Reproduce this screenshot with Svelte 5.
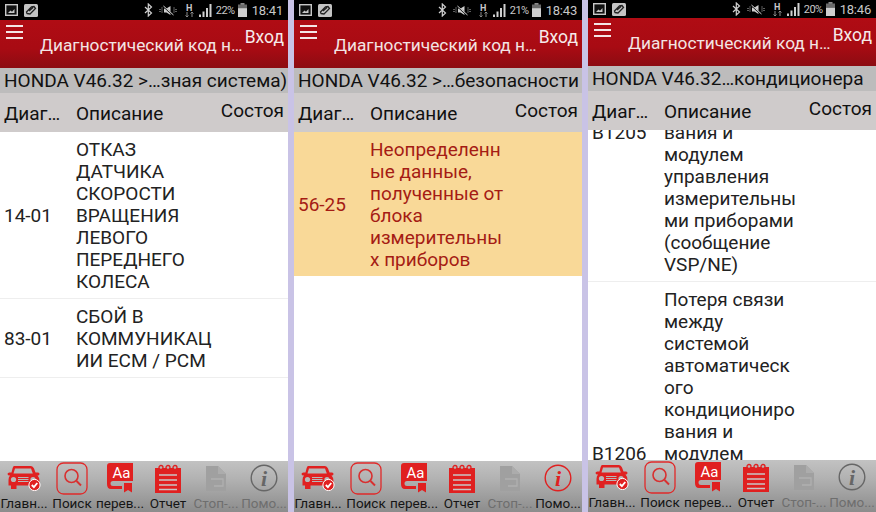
<script>
  const panels = [
    {
      battery: '22%', time: '18:41', fill: 0.7,
      crumb: 'HONDA V46.32 >…зная система)',
      rows: [
        { code: '14-01', text: 'ОТКАЗ\nДАТЧИКА\nСКОРОСТИ\nВРАЩЕНИЯ\nЛЕВОГО\nПЕРЕДНЕГО\nКОЛЕСА' },
        { code: '83-01', text: 'СБОЙ В\nКОММУНИКАЦ\nИИ ECM / PCM' }
      ]
    },
    {
      battery: '21%', time: '18:43', fill: 0.7, helpActive: true,
      crumb: 'HONDA V46.32 >…безопасности',
      rows: [
        { code: '56-25', selected: true, text: 'Неопределенн\nые данные,\nполученные от\nблока\nизмерительны\nх приборов' }
      ]
    },
    {
      battery: '20%', time: '18:46', fill: 0.65, compact: true, scrolled: true,
      crumb: 'HONDA V46.32…кондиционера',
      rows: [
        { code: 'B1205', first: true, text: 'вания и\nмодулем\nуправления\nизмерительны\nми приборами\n(сообщение\nVSP/NE)' },
        { code: 'B1206', last: true, text: 'Потеря связи\nмежду\nсистемой\nавтоматическ\nого\nкондициониро\nвания и\nмодулем' }
      ]
    }
  ];
  const tabs = ['Главн...', 'Поиск', 'перев...', 'Отчет', 'Стоп-...', 'Помо...'];
</script>

{#snippet statusBar(p)}
  <div class="status">
    <svg width="13" height="12" viewBox="0 0 13 12">
      <rect x="0.7" y="0.7" width="11.6" height="10.6" fill="#111" stroke="#c8c8c8" stroke-width="1.4" />
      <path d="M3 9 L5.5 6.5 L7 7.8 L9.5 5 V9 Z" fill="#c8c8c8" />
    </svg>
    <svg class="link" width="14" height="13" viewBox="0 0 14 13">
      <rect width="14" height="13" rx="1.5" fill="#c4c4c4" />
      <path d="M3 9.5 L6 10 L11.5 4.5 L10 2.5 L7.5 2.8 L2.5 8 Z M5 7 L9 3.5" fill="none" stroke="#222" stroke-width="1.3" />
    </svg>
    <div class="status-right">
      <svg width="9" height="14" viewBox="0 0 9 14">
        <path d="M1 4 L7.5 10 L4.3 13 V1 L7.5 4 L1 10" fill="none" stroke="#d0d0d0" stroke-width="1.2" />
      </svg>
      <svg class="mute" width="18" height="11" viewBox="0 0 18 11">
        <path d="M1 4 V7 M3 2.5 V8.5 M15 2.5 V8.5 M17 4 V7" stroke="#bbb" stroke-width="1" stroke-dasharray="1 1" />
        <path d="M5 3.5 H7.5 L11.5 1 V10 L7.5 7.5 H5 Z" fill="#d0d0d0" />
        <path d="M4 1 L14 10" stroke="#111" stroke-width="1.6" />
        <path d="M4.5 1 L14.5 10" stroke="#d0d0d0" stroke-width="1" />
      </svg>
      <div class="net"><span>H</span><svg width="9" height="5" viewBox="0 0 9 5"><path d="M2 0 V5 M0.5 3.5 L2 5 L3.5 3.5 M7 5 V0 M5.5 1.5 L7 0 L8.5 1.5" stroke="#8a8a8a" fill="none" /></svg></div>
      <svg class="bars" width="13" height="13" viewBox="0 0 13 13">
        <path d="M0 13 H2 V10.5 H0 Z M3.5 13 H5.5 V7.5 H3.5 Z M7 13 H9 V4 H7 Z M10.5 13 H12.5 V0 H10.5 Z" fill="#d0d0d0" />
      </svg>
      <span class="pct">{p.battery}</span>
      <svg class="batt" width="9" height="14" viewBox="0 0 9 14">
        <rect x="2.5" y="0" width="4" height="2" fill="#8a8a8a" />
        <rect x="0" y="1.5" width="9" height="12.5" fill="#6a6a6a" />
        <rect x="0" y={1.5 + 12.5 * (1 - p.fill)} width="9" height={12.5 * p.fill} fill="#cfcfcf" />
      </svg>
      <span class="clock">{p.time}</span>
    </div>
  </div>
{/snippet}

{#snippet tabIcon(i, active)}
  {#if i === 0}
    <svg width="34" height="26" viewBox="0 0 34 26">
      <path d="M7 1 H24 Q26 1 27 3.5 L28.5 7.5 H31 Q32.5 7.5 32.5 9 Q32.5 10.5 30.5 10.5 Q32.5 12.5 32.5 16 V21 H28.5 V24 H23 V20.5 H9.5 V24 H4 V20.5 H1.5 V15 Q1.5 12 3 10.5 Q0.5 10.5 0.5 9 Q0.5 7.5 2.5 7.5 H4.5 L5.5 3.5 Q6 1 7 1 Z" fill="#e02020" />
      <path d="M8 3.5 H24 L25.8 8.5 H6.5 Z" fill="#b8b8b8" />
      <circle cx="6.5" cy="14.5" r="2.6" fill="#b8b8b8" />
      <circle cx="26" cy="14.5" r="2.6" fill="#b8b8b8" />
      <path d="M11 12.5 H21.5 M11 14.5 H21.5 M11 16.5 H21.5" stroke="#b8b8b8" stroke-width="1" />
      <circle cx="27.5" cy="20" r="5.6" fill="#e02020" stroke="#fff" stroke-width="1" />
      <path d="M24.8 20 L26.9 22.1 L30.3 18" fill="none" stroke="#fff" stroke-width="1.8" />
    </svg>
  {:else if i === 1}
    <svg width="32" height="33" viewBox="0 0 32 33">
      <rect x="1" y="1" width="30" height="31" rx="6.5" fill="none" stroke="#e02a2a" stroke-width="1.3" />
      <circle cx="15.5" cy="14" r="6.5" fill="none" stroke="#d83030" stroke-width="1.6" />
      <path d="M20.5 19 L25 23.5" stroke="#d83030" stroke-width="2" />
    </svg>
  {:else if i === 2}
    <svg width="27" height="30" viewBox="0 0 27 30">
      <path d="M3 0 H26 V18 H6 Q3.5 18 3.5 20.5 Q3.5 23 6 23 H15 V26 H4 Q0 26 0 21 V3 Q0 0 3 0 Z" fill="#e02020" />
      <path d="M17 20 H25 V29.5 L21 27 L17 29.5 Z" fill="#e02020" />
      <text x="14.5" y="15" class="aa">Aa</text>
    </svg>
  {:else if i === 3}
    <svg width="26" height="29" viewBox="0 0 26 29">
      <rect x="0" y="4" width="26" height="25" fill="#e02020" />
      <circle cx="6" cy="3.5" r="2" fill="#b8b8b8" stroke="#e02020" stroke-width="1.3" />
      <circle cx="13" cy="3.5" r="2" fill="#b8b8b8" stroke="#e02020" stroke-width="1.3" />
      <circle cx="20" cy="3.5" r="2" fill="#b8b8b8" stroke="#e02020" stroke-width="1.3" />
      <path d="M4 11 H22 M4 16 H22 M4 21 H22 M4 25.5 H22" stroke="#c9c4c4" stroke-width="1.6" />
    </svg>
  {:else if i === 4}
    <svg width="20" height="25" viewBox="0 0 20 25">
      <path d="M0 0 H12 L20 8 V25 H0 Z" fill="#a0a0a0" />
      <path d="M12 0 V8 H20" fill="#acacac" />
      <path d="M5 13 H17 V20 H8" fill="none" stroke="#b0b0b0" stroke-width="1.3" />
    </svg>
  {:else}
    <svg class={active ? 'info on' : 'info'} width="28" height="28" viewBox="0 0 28 28">
      <circle cx="14" cy="14" r="12.8" fill="none" stroke="currentColor" stroke-width="1.4" />
      <text x="14" y="22" class="i">i</text>
    </svg>
  {/if}
{/snippet}

<main class="screens">
  {#each panels as p}
    <section class="phone" class:compact={p.compact}>
      {@render statusBar(p)}
      <header class="appbar">
        <div class="menu"><i></i><i></i><i></i></div>
        <div class="title">Диагностический код н…</div>
        <div class="login">Вход</div>
      </header>
      <div class="crumb">{p.crumb}</div>
      <div class="cols">
        <span class="c-code">Диаг…</span>
        <span class="c-desc">Описание</span>
        <span class="c-state">Состоя</span>
      </div>
      <div class="list">
        <div class="inner" class:scrolled={p.scrolled}>
          {#each p.rows as r}
            <div class="row" class:selected={r.selected} class:first={r.first} class:last={r.last}>
              <span class="code">{r.code}</span>
              <span class="desc">{r.text}</span>
            </div>
          {/each}
        </div>
      </div>
      <nav class="tabs">
        {#each tabs as t, i}
          <div class="tab" class:off={i === 4 || (i === 5 && !p.helpActive)}>
            <div class="icon">{@render tabIcon(i, p.helpActive)}</div>
            <span>{t}</span>
          </div>
        {/each}
      </nav>
    </section>
  {/each}
</main>

<style>
  :global(body) {
    margin: 0;
    background: #c9c3e6;
  }
  .screens {
    display: grid;
    grid-template-columns: 288px 288px 288px;
    column-gap: 6px;
    width: 876px;
    height: 512px;
    overflow: hidden;
    background: #c9c3e6;
    font-family: Roboto, "Liberation Sans", sans-serif;
  }
  .phone {
    display: flex;
    flex-direction: column;
    height: 512px;
    background: #fff;
    overflow: hidden;
  }

  .status {
    display: flex;
    align-items: center;
    gap: 6px;
    flex: none;
    height: 20px;
    padding: 0 5px;
    background: #000;
    color: #c8c8c8;
    box-sizing: border-box;
  }
  .compact .status {
    height: 18px;
  }
  .status-right {
    display: flex;
    align-items: center;
    margin-left: auto;
  }
  .mute {
    margin-left: 6px;
  }
  .net {
    display: flex;
    flex-direction: column;
    align-items: center;
    margin-left: 8px;
    line-height: 8px;
    font-size: 9px;
    font-weight: 700;
  }
  .net svg {
    display: block;
  }
  .bars {
    margin-left: 5px;
  }
  .pct {
    margin-left: 4px;
    font-size: 11px;
    letter-spacing: -0.5px;
  }
  .batt {
    margin-left: 3px;
  }
  .clock {
    margin-left: 5px;
    font-size: 13px;
    letter-spacing: -0.2px;
  }

  .appbar {
    position: relative;
    flex: none;
    height: 48px;
    background: linear-gradient(#b00c14 0%, #a80b13 60%, #8c0c12 100%);
    color: #fff;
  }
  .menu {
    position: absolute;
    left: 6px;
    top: 5px;
    display: flex;
    flex-direction: column;
    gap: 3px;
    width: 17px;
  }
  .menu i {
    display: block;
    height: 2px;
    background: #f4e6e6;
    margin-bottom: 1px;
  }
  .title {
    position: absolute;
    left: 40px;
    top: 14px;
    font-size: 17.3px;
    line-height: 22px;
    white-space: nowrap;
    color: #f3e4e4;
  }
  .login {
    position: absolute;
    right: 4px;
    top: 6px;
    font-size: 17.5px;
    line-height: 22px;
    color: #f6eaea;
  }

  .crumb {
    flex: none;
    height: 25px;
    padding-left: 4px;
    background: #bdbcbc;
    color: #111;
    font-size: 19px;
    line-height: 25px;
    white-space: nowrap;
    overflow: hidden;
  }
  .cols {
    position: relative;
    flex: none;
    height: 39px;
    background: #cfcbcb;
    color: #111;
    font-size: 19px;
  }
  .cols span {
    position: absolute;
    line-height: 22px;
    white-space: nowrap;
  }
  .c-code {
    left: 4px;
    top: 10px;
  }
  .c-desc {
    left: 76px;
    top: 10px;
  }
  .c-state {
    right: 4px;
    top: 7px;
  }

  .list {
    flex: 1;
    min-height: 0;
    overflow: hidden;
  }
  .inner.scrolled {
    margin-top: -15px;
  }
  .row {
    display: flex;
    align-items: center;
    padding: 7px 0 5px 4px;
    border-bottom: 1px solid #eeeeee;
    color: #222;
    font-size: 19px;
    line-height: 22px;
  }
  .row.selected {
    background: #f9d998;
    color: #a51c14;
    border-bottom: 0;
  }
  .row.first {
    align-items: flex-start;
  }
  .row.last {
    align-items: flex-end;
  }
  .code {
    flex: none;
    width: 72px;
  }
  .desc {
    white-space: pre-line;
  }

  .tabs {
    display: grid;
    grid-template-columns: repeat(6, 48px);
    flex: none;
    height: 51px;
    background: linear-gradient(#c2c2c2 0%, #b2b2b2 35%, #8c8c8c 100%);
    color: #151515;
    font-size: 13.5px;
  }
  .compact .tabs {
    height: 52px;
  }
  .tab {
    display: flex;
    flex-direction: column;
    align-items: center;
    white-space: nowrap;
  }
  .tab.off {
    color: #6e6e6e;
  }
  .icon {
    display: flex;
    align-items: center;
    justify-content: center;
    height: 34px;
  }
  .tab span {
    line-height: 16px;
  }
  .aa {
    font-family: Roboto, sans-serif;
    font-size: 15px;
    fill: #fff;
    text-anchor: middle;
  }
  .info {
    color: #666;
  }
  .info.on {
    color: #e02020;
  }
  .i {
    font-family: "Liberation Serif", serif;
    font-style: italic;
    font-weight: 700;
    font-size: 22px;
    fill: currentColor;
    text-anchor: middle;
  }
</style>
